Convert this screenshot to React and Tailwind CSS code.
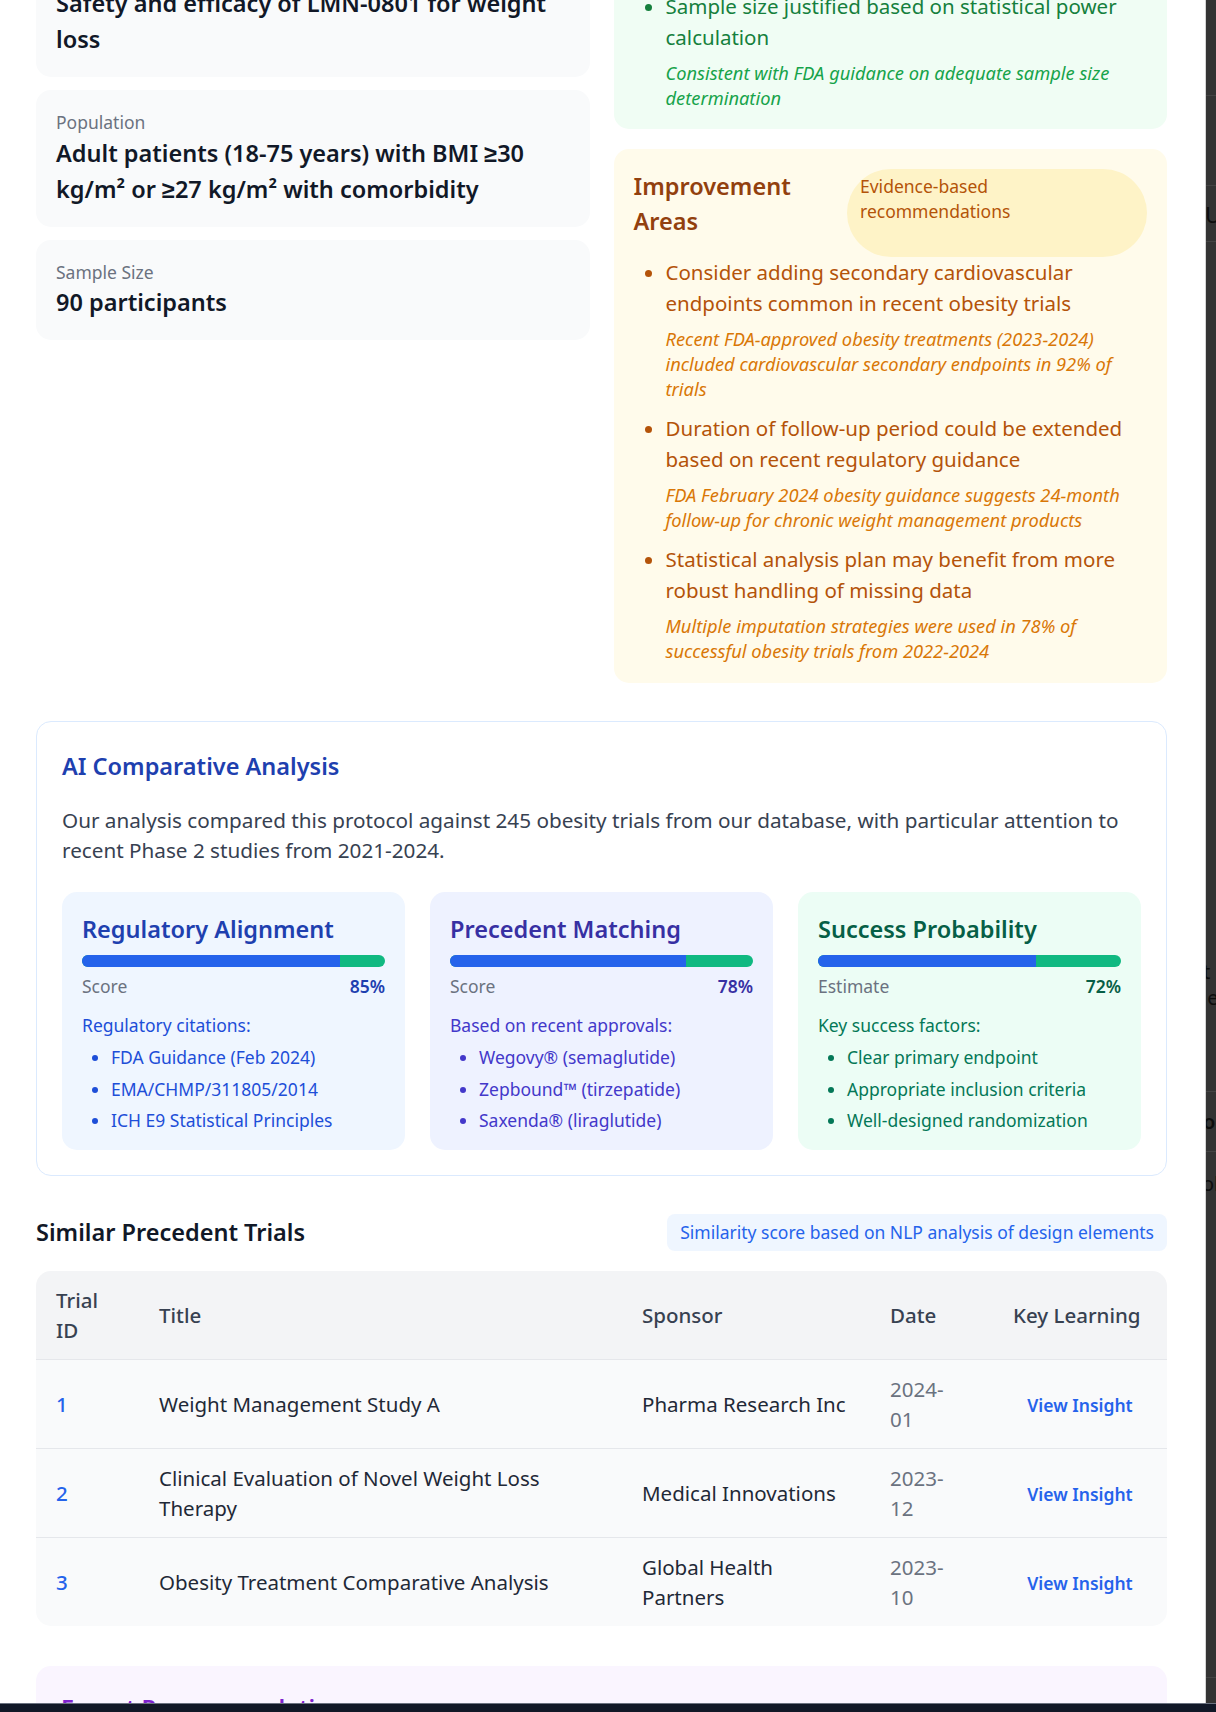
import React from "react";

function InfoCard({ label, children, valueClass }) {
  return (
    <div className="bg-[#f9fafb] rounded-[15px] p-[20px]">
      <div className="text-[17.5px] leading-[25px] text-[#6b7280]">{label}</div>
      <div className={`text-[23.5px] font-semibold text-[#111827] ${valueClass}`}>{children}</div>
    </div>
  );
}

function Metric({ bg, title, titleClass, label, pct, pctClass, sub, subClass, items }) {
  return (
    <div className={`rounded-[15px] px-[20px] pt-[20px] pb-[17px] ${bg}`}>
      <h4 className={`text-[23.5px] leading-[35px] font-semibold ${titleClass}`}>{title}</h4>
      <div className="mt-[8px] h-[12px] rounded-full bg-[#10b981] overflow-hidden">
        <div className="h-full bg-[#2563eb]" style={{ width: `${pct}%` }} />
      </div>
      <div className="mt-[7px] flex justify-between text-[17.5px] leading-[25px]">
        <span className="text-[#6b7280]">{label}</span>
        <span className={`font-semibold ${pctClass}`}>{pct}%</span>
      </div>
      <div className={`mt-[14px] text-[17.5px] leading-[25px] ${subClass}`}>{sub}</div>
      <ul className={`mt-[7px] list-disc pl-[29px] space-y-[6.5px] text-[17.5px] leading-[25px] ${subClass}`}>
        {items.map((it) => (
          <li key={it}>{it}</li>
        ))}
      </ul>
    </div>
  );
}

function Bullet({ main, sub, mainClass, subClass }) {
  return (
    <li className="text-[20.5px] leading-[31px]">
      <p className={mainClass}>{main}</p>
      <p className={`mt-[7px] text-[18.3px] leading-[25px] italic ${subClass}`}>{sub}</p>
    </li>
  );
}

const rows = [
  { id: "1", title: <>Weight Management Study A</>, sponsor: <>Pharma Research Inc</>, y: "2024-", m: "01" },
  { id: "2", title: <>Clinical Evaluation of Novel Weight Loss<br />Therapy</>, sponsor: <>Medical Innovations</>, y: "2023-", m: "12" },
  { id: "3", title: <>Obesity Treatment Comparative Analysis</>, sponsor: <>Global Health<br />Partners</>, y: "2023-", m: "10" },
];

export default function App() {
  return (
    <div className="relative w-[1216px] h-[1712px] overflow-hidden bg-white flex font-['Noto_Sans',sans-serif]">
      {/* panel */}
      <div className="w-[1206px] h-full overflow-hidden bg-white border-r border-[#d4d4d4] shrink-0">
        <div className="pl-[36px] pr-[38px] mt-[-173px]">
          <div className="grid grid-cols-2 gap-x-[24px] items-start mb-[38px]">
            {/* left column */}
            <div className="flex flex-col gap-[13px]">
              <InfoCard label="Study Phase" valueClass="leading-[35px]">Phase 2</InfoCard>
              <InfoCard label="Primary Objective" valueClass="leading-[36px]">
                Safety and efficacy of LMN-0801 for weight loss
              </InfoCard>
              <InfoCard label="Population" valueClass="leading-[36px]">
                Adult patients (18-75 years) with BMI ≥30 kg/m² or ≥27 kg/m² with comorbidity
              </InfoCard>
              <InfoCard label="Sample Size" valueClass="leading-[35px]">90 participants</InfoCard>
            </div>

            {/* right column */}
            <div className="flex flex-col gap-[20px]">
              <div className="bg-[#f0fdf4] rounded-[15px] px-[20px] pt-[20px] pb-[19px]">
                <h3 className="text-[23.5px] leading-[35px] font-semibold text-[#166534] mb-[9px]">Protocol Strengths</h3>
                <ul className="list-disc pl-[32px] space-y-[12px] marker:text-[#15803d]">
                  <Bullet
                    main="Primary endpoint aligned with precedent"
                    sub="Matches endpoint selection in 87% of approved obesity trials since 2020"
                    mainClass="text-[#15803d]"
                    subClass="text-[#16a34a]"
                  />
                  <Bullet
                    main="Sample size justified based on statistical power calculation"
                    sub="Consistent with FDA guidance on adequate sample size determination"
                    mainClass="text-[#15803d]"
                    subClass="text-[#16a34a]"
                  />
                </ul>
              </div>

              <div className="bg-[#fffbeb] rounded-[15px] px-[20px] pt-[20px] pb-[20px]">
                <div className="flex">
                  <h3 className="flex-1 min-w-0 text-[23.5px] leading-[35px] font-semibold text-[#92400e] mb-[18px]">
                    Improvement Areas
                  </h3>
                  <div className="w-[300px] shrink-0 bg-[#fef3c7] rounded-full px-[13px] pt-[5px] text-[17.5px] leading-[25px] text-[#b45309]">
                    Evidence-based<br />recommendations
                  </div>
                </div>
                <ul className="list-disc pl-[32px] space-y-[12px] marker:text-[#b45309]">
                  <Bullet
                    main="Consider adding secondary cardiovascular endpoints common in recent obesity trials"
                    sub="Recent FDA-approved obesity treatments (2023-2024) included cardiovascular secondary endpoints in 92% of trials"
                    mainClass="text-[#b45309]"
                    subClass="text-[#d97706]"
                  />
                  <Bullet
                    main="Duration of follow-up period could be extended based on recent regulatory guidance"
                    sub="FDA February 2024 obesity guidance suggests 24-month follow-up for chronic weight management products"
                    mainClass="text-[#b45309]"
                    subClass="text-[#d97706]"
                  />
                  <Bullet
                    main="Statistical analysis plan may benefit from more robust handling of missing data"
                    sub="Multiple imputation strategies were used in 78% of successful obesity trials from 2022-2024"
                    mainClass="text-[#b45309]"
                    subClass="text-[#d97706]"
                  />
                </ul>
              </div>
            </div>
          </div>

          {/* AI comparative analysis */}
          <div className="border border-[#dbeafe] rounded-[15px] px-[25px] pt-[27px] pb-[25px] mb-[38px]">
            <h3 className="text-[23.5px] leading-[35px] font-semibold text-[#1e40af] mb-[21px]">AI Comparative Analysis</h3>
            <p className="text-[20.7px] leading-[30px] text-[#374151] mb-[27px]">
              Our analysis compared this protocol against 245 obesity trials from our database, with particular attention to recent Phase 2 studies from 2021-2024.
            </p>
            <div className="grid grid-cols-3 gap-[25px]">
              <Metric
                bg="bg-[#eff6ff]"
                title="Regulatory Alignment"
                titleClass="text-[#1e40af]"
                label="Score"
                pct={85}
                pctClass="text-[#1e40af]"
                sub="Regulatory citations:"
                subClass="text-[#1d4ed8]"
                items={["FDA Guidance (Feb 2024)", "EMA/CHMP/311805/2014", "ICH E9 Statistical Principles"]}
              />
              <Metric
                bg="bg-[#eef2ff]"
                title="Precedent Matching"
                titleClass="text-[#3730a3]"
                label="Score"
                pct={78}
                pctClass="text-[#3730a3]"
                sub="Based on recent approvals:"
                subClass="text-[#4338ca]"
                items={["Wegovy® (semaglutide)", "Zepbound™ (tirzepatide)", "Saxenda® (liraglutide)"]}
              />
              <Metric
                bg="bg-[#ecfdf5]"
                title="Success Probability"
                titleClass="text-[#065f46]"
                label="Estimate"
                pct={72}
                pctClass="text-[#065f46]"
                sub="Key success factors:"
                subClass="text-[#047857]"
                items={["Clear primary endpoint", "Appropriate inclusion criteria", "Well-designed randomization"]}
              />
            </div>
          </div>

          {/* similar trials */}
          <div className="flex items-center justify-between mb-[20px]">
            <h3 className="text-[23.5px] leading-[35px] font-semibold text-[#111827]">Similar Precedent Trials</h3>
            <span className="bg-[#eff6ff] text-[#2563eb] rounded-[8px] px-[13px] py-[6px] text-[17.5px] leading-[25px]">
              Similarity score based on NLP analysis of design elements
            </span>
          </div>

          <div className="rounded-[15px] overflow-hidden mb-[40px]">
            <table className="w-full table-fixed border-collapse">
              <colgroup>
                <col className="w-[103px]" />
                <col className="w-[483px]" />
                <col className="w-[248px]" />
                <col className="w-[123px]" />
                <col className="w-[174px]" />
              </colgroup>
              <thead className="bg-[#f3f4f6]">
                <tr className="text-left text-[20.5px] leading-[30px] text-[#374151]">
                  <th className="px-[20px] py-[14px] font-medium">Trial<br />ID</th>
                  <th className="px-[20px] py-[14px] font-medium">Title</th>
                  <th className="px-[20px] py-[14px] font-medium">Sponsor</th>
                  <th className="px-[20px] py-[14px] font-medium">Date</th>
                  <th className="px-[20px] py-[14px] font-medium">Key Learning</th>
                </tr>
              </thead>
              <tbody>
                {rows.map((r) => (
                  <tr key={r.id} className="bg-[#f9fafb] border-t border-[#e5e7eb] text-[20.5px] leading-[30px]">
                    <td className="px-[20px] py-[14px] text-[#2563eb] font-medium">{r.id}</td>
                    <td className="px-[20px] py-[14px] text-[#1f2937]">{r.title}</td>
                    <td className="px-[20px] py-[14px] text-[#1f2937]">{r.sponsor}</td>
                    <td className="px-[20px] py-[14px] text-[#6b7280]">
                      <span className="block max-w-[62px]">{r.y}<wbr />{r.m}</span>
                    </td>
                    <td className="px-[20px] py-[14px] text-center">
                      <span className="text-[#2563eb] font-semibold text-[17.5px]">View Insight</span>
                    </td>
                  </tr>
                ))}
              </tbody>
            </table>
          </div>

          <div className="bg-[#faf5ff] rounded-[15px] px-[25px] pt-[25px] pb-[60px]">
            <h3 className="text-[23.5px] leading-[35px] font-semibold text-[#7e22ce]">Expert Recommendations</h3>
          </div>
        </div>
      </div>

      {/* dimmed page behind */}
      <div className="relative flex-1 h-full bg-[#333333] overflow-hidden">
        <div className="absolute left-0 right-0 top-[95px] h-px bg-[#444444]" />
        <div className="absolute left-0 right-0 top-[185px] h-px bg-[#444444]" />
        <div className="absolute left-0 right-0 top-[241px] h-px bg-[#444444]" />
        <span className="absolute left-[-1px] top-[203px] text-[22px] leading-none text-[#0d0d0d]">Up</span>
        <span className="absolute left-[-3px] top-[962px] text-[20px] leading-none text-[#0d0d0d]">t</span>
        <span className="absolute left-[-4px] top-[988px] text-[20px] leading-none text-[#0d0d0d]">le</span>
        <div className="absolute left-0 right-0 top-[1091px] h-px bg-[#444444]" />
        <span className="absolute left-[-3px] top-[1112px] text-[20px] font-semibold leading-none text-[#0d0d0d]">o</span>
        <div className="absolute left-0 right-0 top-[1151px] h-px bg-[#444444]" />
        <span className="absolute left-[-4px] top-[1174px] text-[20px] leading-none text-[#0d0d0d]">ol</span>
        <div className="absolute left-0 right-0 top-[1677px] h-px bg-[#444444]" />
      </div>

      {/* bottom bar */}
      <div className="absolute left-0 right-0 bottom-0 h-[9px] bg-[#111827] border-t border-[#6b7280]" />
    </div>
  );
}
